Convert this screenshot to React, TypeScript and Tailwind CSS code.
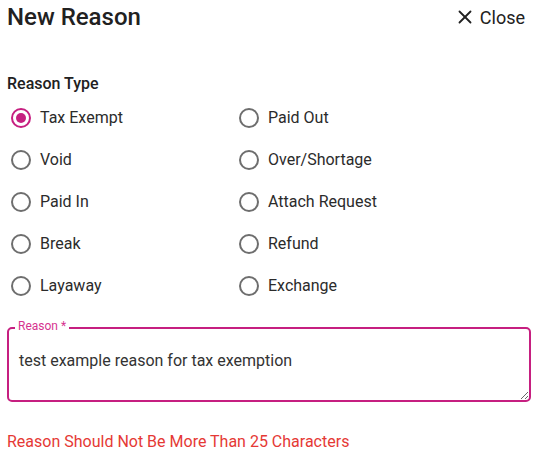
import { X } from "lucide-react";

const LEFT = ["Tax Exempt", "Void", "Paid In", "Break", "Layaway"];
const RIGHT = ["Paid Out", "Over/Shortage", "Attach Request", "Refund", "Exchange"];

function Radio({ label, checked }: { label: string; checked?: boolean }) {
  return (
    <label className="flex items-center h-[42px] gap-[9px] cursor-pointer">
      <span
        className={`w-5 h-5 rounded-full border-2 flex items-center justify-center shrink-0 ${
          checked ? "border-[#c61f80]" : "border-[#6e6e6e]"
        }`}
      >
        {checked && <span className="w-[10px] h-[10px] rounded-full bg-[#c61f80]" />}
      </span>
      <span className="text-[16px] text-[#2b2b2b]">{label}</span>
    </label>
  );
}

export default function App() {
  return (
    <div className="w-[535px] h-[453px] bg-white font-['Roboto',sans-serif] px-[7px] overflow-hidden">
      {/* Header */}
      <div className="flex items-center justify-between h-[34px] pr-[3px]">
        <h1 className="text-[24px] font-medium text-[#212121]">New Reason</h1>
        <button className="flex items-center gap-[4px] text-[18px] text-[#212121]">
          <X className="w-[22px] h-[22px]" strokeWidth={2} />
          Close
        </button>
      </div>

      <div className="mt-[38px] text-[16px] leading-[24px] font-medium text-[#212121]">Reason Type</div>

      <div className="grid grid-cols-[230px_1fr] pl-1 mt-[1px]">
        <div className="flex flex-col">
          {LEFT.map((l, i) => (
            <Radio key={l} label={l} checked={i === 0} />
          ))}
        </div>
        <div className="flex flex-col -ml-[2px]">
          {RIGHT.map((l) => (
            <Radio key={l} label={l} />
          ))}
        </div>
      </div>

      {/* Reason field */}
      <div className="relative mt-[20px]">
        <span className="absolute -top-[8px] left-[8px] bg-white px-[3px] text-[12px] leading-[14px] text-[#d6338f]">
          Reason *
        </span>
        <textarea
          defaultValue="test example reason for tax exemption"
          className="block w-[524px] h-[75px] border-2 border-[#c61f80] rounded-[5px] px-[10px] pt-[21px] text-[16px] leading-[22px] text-[#333] outline-none resize-y font-['Roboto',sans-serif]"
        />
      </div>

      <div className="mt-[28px] text-[16px] leading-[24px] text-[#e53935]">
        Reason Should Not Be More Than 25 Characters
      </div>
    </div>
  );
}
